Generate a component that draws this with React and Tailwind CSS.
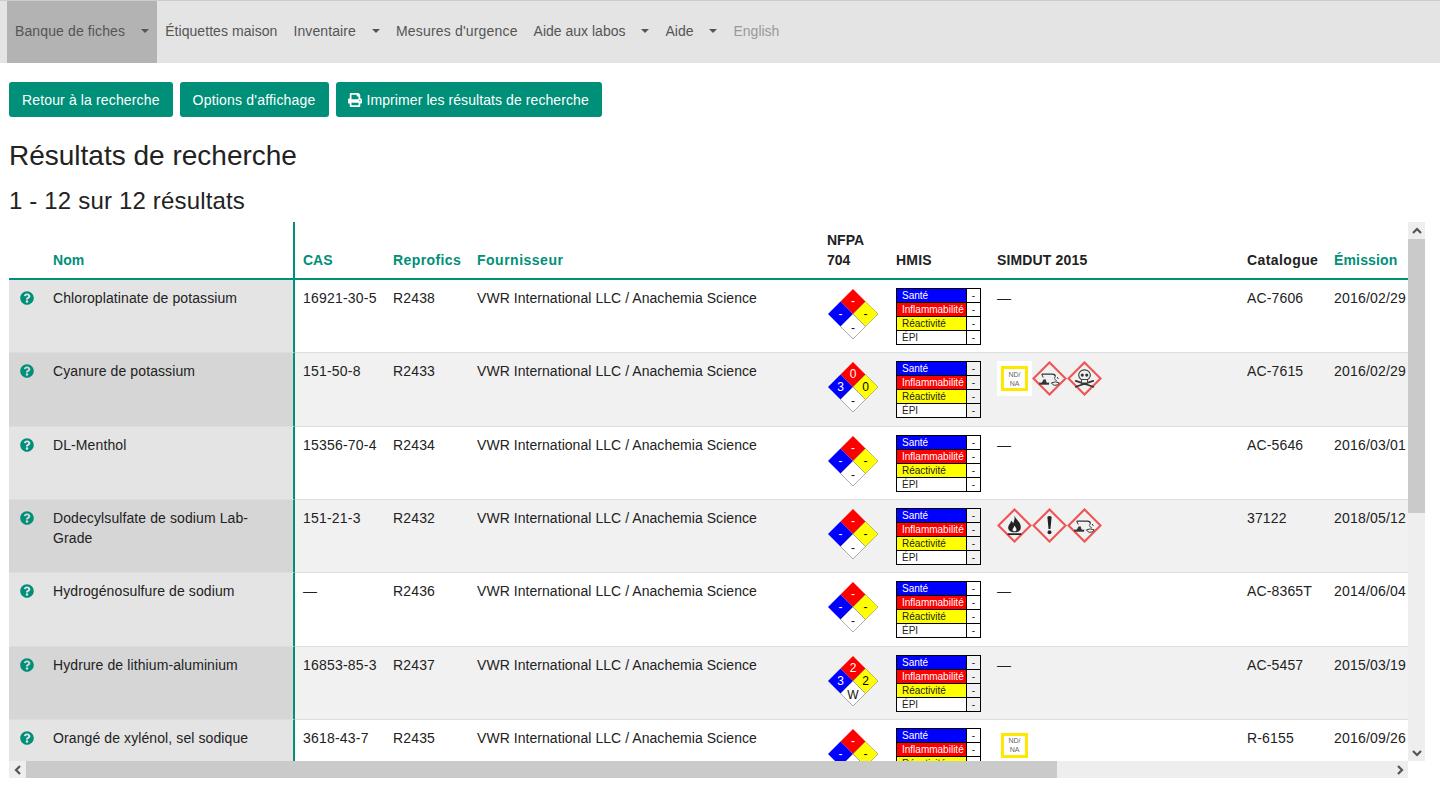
import { FaPrint, FaQuestionCircle } from 'react-icons/fa';

const VENDOR = 'VWR International LLC / Anachemia Science';

const rows = [
  { name: 'Chloroplatinate de potassium', cas: '16921-30-5', ref: 'R2438', cat: 'AC-7606', date: '2016/02/29', nfpa: ['-', '-', '-', '-'], ghs: [] },
  { name: 'Cyanure de potassium', cas: '151-50-8', ref: 'R2433', cat: 'AC-7615', date: '2016/02/29', nfpa: ['0', '3', '0', '-'], ghs: ['nd', 'corrosion', 'skull'] },
  { name: 'DL-Menthol', cas: '15356-70-4', ref: 'R2434', cat: 'AC-5646', date: '2016/03/01', nfpa: ['-', '-', '-', '-'], ghs: [] },
  { name: 'Dodecylsulfate de sodium Lab-Grade', cas: '151-21-3', ref: 'R2432', cat: '37122', date: '2018/05/12', nfpa: ['-', '-', '-', '-'], ghs: ['flame', 'exclamation', 'corrosion'] },
  { name: 'Hydrogénosulfure de sodium', cas: '—', ref: 'R2436', cat: 'AC-8365T', date: '2014/06/04', nfpa: ['-', '-', '-', '-'], ghs: [] },
  { name: 'Hydrure de lithium-aluminium', cas: '16853-85-3', ref: 'R2437', cat: 'AC-5457', date: '2015/03/19', nfpa: ['2', '3', '2', 'W'], ghs: [] },
  { name: 'Orangé de xylénol, sel sodique', cas: '3618-43-7', ref: 'R2435', cat: 'R-6155', date: '2016/09/26', nfpa: ['-', '-', '-', '-'], ghs: ['nd'] },
];

function NavItem({ label, caret, active, muted, className = '' }) {
  return (
    <a className={`flex h-full items-center px-2 pb-[3px] ${active ? 'bg-[#b3b3b3]' : ''} ${muted ? 'text-[#999]' : 'text-[#555]'} ${className}`}>
      {label}
      {caret && <span className="ml-4 border-x-[4px] border-t-[4px] border-x-transparent border-t-[#555]" />}
    </a>
  );
}

function Diamond({ values }) {
  const [red, blue, yellow, white] = values;
  return (
    <svg width="52" height="52" viewBox="0 0 52 52" className="block">
      <polygon points="26,1 38.5,13.5 26,26 13.5,13.5" fill="#ff0000" />
      <polygon points="13.5,13.5 26,26 13.5,38.5 1,26" fill="#0000ff" />
      <polygon points="38.5,13.5 51,26 38.5,38.5 26,26" fill="#ffff00" stroke="#777" strokeWidth="0.5" />
      <polygon points="26,26 38.5,38.5 26,51 13.5,38.5" fill="#fff" stroke="#888" strokeWidth="0.7" />
      <g fontSize="12" textAnchor="middle" fontFamily="Liberation Sans, sans-serif">
        <text x="26" y="17" fill="#fff">{red}</text>
        <text x="13.5" y="30" fill="#fff">{blue}</text>
        <text x="38.5" y="30" fill="#000">{yellow}</text>
        <text x="26" y="44" fill="#111">{white}</text>
      </g>
    </svg>
  );
}

function Hmis() {
  const lines = [
    ['Santé', 'bg-[#0000ff] text-white'],
    ['Inflammabilité', 'bg-[#ff0000] text-white'],
    ['Réactivité', 'bg-[#ffff00] text-[#222]'],
    ['ÉPI', 'bg-white text-[#222]'],
  ];
  return (
    <div className="w-[85px] border border-black text-[10px] leading-[13px]">
      {lines.map(([label, color], i) => (
        <div key={label} className={`flex ${i > 0 ? 'h-[14px] border-t border-black' : 'h-[13px]'}`}>
          <div className={`w-[69px] pl-[5px] ${color}`}>{label}</div>
          <div className="flex-1 border-l border-black text-center text-[#222]">-</div>
        </div>
      ))}
    </div>
  );
}

function Pictogram({ kind }) {
  if (kind === 'nd') {
    return (
      <div className="flex h-[35px] w-[35px] items-center justify-center bg-white">
        <div className="flex h-[25px] w-[27px] items-center justify-center border-[3px] border-[#ffe800] text-center text-[7px] leading-[9px] text-[#666]">
          ND/<br />NA
        </div>
      </div>
    );
  }
  return (
    <svg width="35" height="35" viewBox="0 0 36 36" className="block">
      <polygon points="18,1.5 34.5,18 18,34.5 1.5,18" fill="none" stroke="#f05555" strokeWidth="2.2" />
      {kind === 'corrosion' && (
        <g fill="#333" stroke="#333">
          <path d="M10 13.5 H21 Q24 13.5 24 16" fill="none" strokeWidth="1.3" />
          <path d="M10 13.5 L11.5 17 M24 16 L23 18" fill="none" strokeWidth="1" />
          <rect x="7.5" y="22.5" width="10" height="1.8" strokeWidth="0.2" />
          <path d="M10 22.5 L12 19 H14 L15 22.5 Z" strokeWidth="0.2" />
          <path d="M20 22.5 q4 -2 8 0 q-1 3 -5 2.5 q-2 -0.5 -3 -2.5 z" fill="none" strokeWidth="1" />
          <path d="M23 18.5 L25.5 20.5 M26 16.5 L27 18.5" fill="none" strokeWidth="1" />
        </g>
      )}
      {kind === 'skull' && (
        <g fill="#333" stroke="#333">
          <path d="M9 20.5 L27 26.5 M27 20.5 L9 26.5" strokeWidth="1.8" strokeLinecap="round" />
          <ellipse cx="18" cy="14.5" rx="6" ry="5.4" fill="#f1f1f1" strokeWidth="1.1" />
          <rect x="15" y="19" width="6" height="3.6" fill="#f1f1f1" strokeWidth="0.9" />
          <circle cx="15.7" cy="14.5" r="1.6" strokeWidth="0" />
          <circle cx="20.3" cy="14.5" r="1.6" strokeWidth="0" />
        </g>
      )}
      {kind === 'flame' && (
        <g fill="#222">
          <path d="M18 7.5 C19 12 24.5 14 24.5 20 C24.5 23 22 25 18 25 C14 25 11.5 23 11.5 20 C11.5 17 14 16 14.5 13 C16 14 16.5 15 16.5 16 C17.5 14 18.5 11 18 7.5 Z" />
          <path d="M18 18 C19 20 20.5 21 20 23 C19.6 24.4 16.6 24.4 16 23 C15.5 21.5 17.5 20.5 18 18 Z" fill="#f1f1f1" />
          <rect x="11" y="26" width="14" height="1.8" />
        </g>
      )}
      {kind === 'exclamation' && (
        <g fill="#222">
          <path d="M15.8 9 Q18 7.5 20.2 9 L19 21.5 H17 Z" />
          <circle cx="18" cy="25" r="2" />
        </g>
      )}
    </svg>
  );
}

function Chevron({ dir }) {
  const d = {
    up: 'M2 8 L6 4 L10 8',
    down: 'M2 4 L6 8 L10 4',
    left: 'M8 2 L4 6 L8 10',
    right: 'M4 2 L8 6 L4 10',
  }[dir];
  return (
    <svg width="12" height="12" viewBox="0 0 12 12">
      <path d={d} fill="none" stroke="#555" strokeWidth="2.2" />
    </svg>
  );
}

function Th({ children, teal, className = 'tracking-[0.5px]' }) {
  return (
    <th className={`border-b-2 border-[#008f78] px-2 pb-2 pt-2 text-left align-bottom font-bold ${teal ? 'text-[#008f78]' : 'text-[#222]'} ${className}`}>
      {children}
    </th>
  );
}

function ResultsTable() {
  return (
    <table className="w-[1450px] table-fixed border-separate border-spacing-0 text-sm leading-5 text-[#222]">
      <colgroup>
        <col className="w-[36px]" />
        <col className="w-[250px]" />
        <col className="w-[90px]" />
        <col className="w-[84px]" />
        <col className="w-[350px]" />
        <col className="w-[69px]" />
        <col className="w-[101px]" />
        <col className="w-[250px]" />
        <col className="w-[87px]" />
        <col className="w-[133px]" />
      </colgroup>
      <thead>
        <tr className="h-[58px]">
          <Th />
          <Th teal className="border-r-2 tracking-[0.1px]">Nom</Th>
          <Th teal className="tracking-normal">CAS</Th>
          <Th teal className="tracking-[0.4px]">Reprofics</Th>
          <Th teal>Fournisseur</Th>
          <Th className="tracking-normal">NFPA 704</Th>
          <Th className="tracking-[0.2px]">HMIS</Th>
          <Th className="tracking-[0.15px]">SIMDUT 2015</Th>
          <Th className="tracking-[0.4px]">Catalogue</Th>
          <Th teal className="tracking-[0.15px]">Émission</Th>
        </tr>
      </thead>
      <tbody>
        {rows.map((row, i) => {
          const even = i % 2 === 1;
          const cell = 'border-b border-[#ddd] px-2 pt-2 pb-0 align-top';
          const sticky = even ? 'bg-[#d6d6d6]' : 'bg-[#e4e4e4]';
          return (
            <tr key={row.ref} className={`h-[73.33px] ${even ? 'bg-[#f1f1f1]' : 'bg-white'}`}>
              <td className={`${cell} ${sticky} pl-[11px] pr-0 pt-[11px]`}>
                <FaQuestionCircle className="text-[14px] text-[#008f78]" />
              </td>
              <td className={`${cell} ${sticky} border-r-2 border-r-[#008f78] pr-[40px] tracking-[0.1px]`}>{row.name}</td>
              <td className={`${cell} tracking-[0.2px]`}>{row.cas}</td>
              <td className={`${cell} tracking-[0.15px]`}>{row.ref}</td>
              <td className={`${cell} tracking-[0.05px]`}>{VENDOR}</td>
              <td className={cell}><Diamond values={row.nfpa} /></td>
              <td className={cell}><Hmis /></td>
              <td className={cell}>
                {row.ghs.length ? (
                  <div className="flex">
                    {row.ghs.map((kind, k) => <Pictogram key={k} kind={kind} />)}
                  </div>
                ) : '—'}
              </td>
              <td className={`${cell} tracking-[0.15px]`}>{row.cat}</td>
              <td className={`${cell} tracking-[0.2px]`}>{row.date}</td>
            </tr>
          );
        })}
      </tbody>
    </table>
  );
}

export default function App() {
  return (
    <div className="h-[799px] overflow-hidden bg-white [font-family:Liberation_Sans,Arial,sans-serif] text-sm text-[#222]">
      <nav className="flex h-[63px] items-stretch border-t border-[#ccc] bg-[#e4e4e4] pl-[7px]">
        <NavItem label="Banque de fiches" caret active className="tracking-[0.12px]" />
        <NavItem label="Étiquettes maison" className="tracking-[0.06px]" />
        <NavItem label="Inventaire" caret className="tracking-[0.1px]" />
        <NavItem label="Mesures d'urgence" className="tracking-[0.18px]" />
        <NavItem label="Aide aux labos" caret />
        <NavItem label="Aide" caret />
        <NavItem label="English" muted />
      </nav>

      <div className="pl-[9px] pr-[15px] pt-[19px]">
        <div className="flex gap-[7px]">
          <button className="h-[35px] rounded-[3px] bg-[#008f78] px-[13px] tracking-[0.14px] text-white">Retour à la recherche</button>
          <button className="h-[35px] rounded-[3px] bg-[#008f78] px-[13px] tracking-[0.2px] text-white">Options d'affichage</button>
          <button className="flex h-[35px] items-center gap-[5px] rounded-[3px] bg-[#008f78] pl-[12px] pr-[13px] tracking-[0.08px] text-white">
            <FaPrint className="text-[14px]" />
            Imprimer les résultats de recherche
          </button>
        </div>

        <h1 className="mt-[22px] text-[28px] leading-[34px]">Résultats de recherche</h1>
        <h2 className="mt-[13px] text-2xl leading-[29px] tracking-[0.17px]">1 - 12 sur 12 résultats</h2>

        <div className="mt-[7px] w-[1416px]">
          <div className="flex h-[539px]">
            <div className="w-[1399px] overflow-hidden">
              <ResultsTable />
            </div>
            <div className="flex w-[17px] flex-col bg-[#eee]">
              <div className="flex h-[17px] items-center justify-center"><Chevron dir="up" /></div>
              <div className="h-[274px] bg-[#cacaca]" />
              <div className="flex-1" />
              <div className="flex h-[17px] items-center justify-center"><Chevron dir="down" /></div>
            </div>
          </div>
          <div className="flex h-[17px] w-[1399px] bg-[#eee]">
            <div className="flex w-[17px] items-center justify-center"><Chevron dir="left" /></div>
            <div className="w-[1031px] bg-[#cacaca]" />
            <div className="flex-1" />
            <div className="flex w-[17px] items-center justify-center"><Chevron dir="right" /></div>
          </div>
        </div>
      </div>
    </div>
  );
}
